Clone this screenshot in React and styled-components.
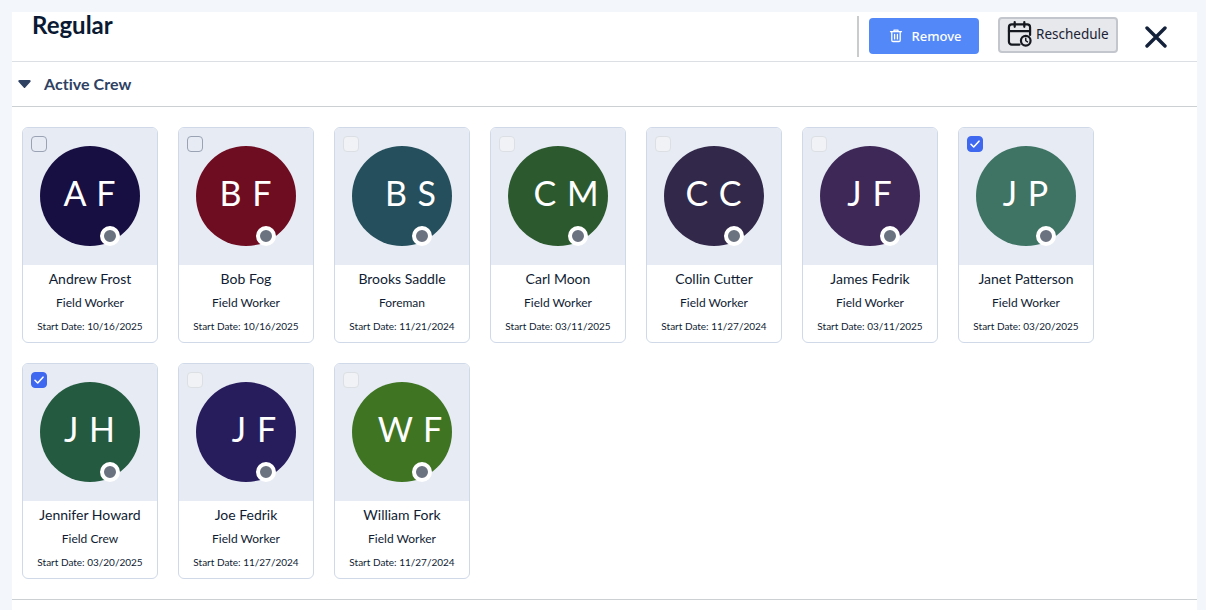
import React from 'react'
import styled, { createGlobalStyle } from 'styled-components'

const GlobalStyle = createGlobalStyle`
  html, body {
    margin: 0;
    padding: 0;
    background: #f3f6fa;
    font-family: "Lato", "Liberation Sans", sans-serif;
  }
`

const Page = styled.div`
  width: 1206px;
  height: 610px;
  padding: 12px 9px 0 12px;
  box-sizing: border-box;
  overflow: hidden;
`

const Panel = styled.div`
  background: #fff;
  height: 598px;
`

const Header = styled.div`
  height: 50px;
  box-sizing: border-box;
  display: flex;
  justify-content: space-between;
  border-bottom: 1px solid #dcdfe3;
`

const Title = styled.h1`
  margin: -1px 0 0 20px;
  font-size: 24px;
  line-height: 28px;
  font-weight: 700;
  color: #0b1a33;
`

const Actions = styled.div`
  display: flex;
  align-items: flex-start;
  padding-top: 4px;
`

const Divider = styled.div`
  width: 2px;
  height: 41px;
  background: #c9cbcd;
  margin-right: 10px;
`

const RemoveButton = styled.button`
  width: 110px;
  height: 36px;
  margin-top: 2px;
  border: none;
  border-radius: 4px;
  background: #5288f8;
  color: #fff;
  font-family: "Noto Sans", sans-serif;
  font-size: 13px;
  font-weight: 500;
  display: flex;
  align-items: center;
  justify-content: center;
  gap: 9px;
  padding: 0 0 1px 2px;
`

const RescheduleButton = styled.button`
  width: 120px;
  height: 36px;
  margin: 1px 0 0 19px;
  box-sizing: border-box;
  border: 2px solid #c3c6cd;
  border-radius: 4px;
  background: #e7e8ec;
  color: #1b2233;
  font-family: "Noto Sans", sans-serif;
  font-size: 13.5px;
  display: flex;
  align-items: center;
  gap: 4px;
  padding: 0 0 2px 7px;
`

const CloseButton = styled.button`
  width: 28px;
  height: 28px;
  margin: 7px 27px 0 24px;
  padding: 0;
  border: none;
  background: none;
  display: flex;
  align-items: center;
  justify-content: center;
`

const SectionHead = styled.div`
  height: 45px;
  box-sizing: border-box;
  display: flex;
  align-items: center;
  gap: 13px;
  padding: 0 0 2px 6px;
  border-bottom: 1px solid #cdd0d3;
`

const SectionTitle = styled.span`
  font-size: 16px;
  font-weight: 700;
  color: #2e4163;
  letter-spacing: 0.05px;
`

const CardGrid = styled.div`
  display: grid;
  grid-template-columns: repeat(7, 136px);
  grid-auto-rows: 216px;
  gap: 20px;
  padding: 20px 10px;
  height: 493px;
  box-sizing: border-box;
  border-bottom: 1px solid #cdd0d3;
`

const Card = styled.div`
  box-sizing: border-box;
  border: 1px solid #cfd9e8;
  border-radius: 6px;
  overflow: hidden;
  display: flex;
  flex-direction: column;
  background: #fff;
`

const CardTop = styled.div`
  position: relative;
  height: 137px;
  flex: none;
  background: #e7ebf4;
  padding: 18px 0 0 17px;
  box-sizing: border-box;
`

const Checkbox = styled.span`
  position: absolute;
  top: 8px;
  left: 8px;
  width: 16px;
  height: 16px;
  box-sizing: border-box;
  border-radius: 4px;
  border: 1px solid ${p => (p.$checked ? '#3f68f0' : p.$faded ? '#dcdfe4' : '#9aa3b3')};
  background: ${p => (p.$checked ? '#3f68f0' : p.$faded ? '#f1f2f5' : 'transparent')};
  display: flex;
  align-items: center;
  justify-content: center;
`

const Avatar = styled.div`
  position: relative;
  width: 100px;
  height: 100px;
  box-sizing: border-box;
  padding-bottom: 7px;
  border-radius: 50%;
  background: ${p => p.$color};
  color: #fff;
  font-size: 34px;
  letter-spacing: 1px;
  display: flex;
  align-items: center;
  justify-content: center;
`

const Initials = styled.span`
  line-height: 1;
  white-space: pre;
  margin-left: ${p => p.$shift || 0}px;
`

const Status = styled.span`
  position: absolute;
  left: 60px;
  top: 80px;
  width: 20px;
  height: 20px;
  box-sizing: border-box;
  border: 4px solid #fff;
  border-radius: 50%;
  background: #6b7280;
`

const CardBody = styled.div`
  flex: 1;
  display: flex;
  flex-direction: column;
  align-items: center;
  padding-top: 5px;
  color: #0f1c33;
`

const Name = styled.div`
  font-size: 14px;
  line-height: 18px;
`

const Role = styled.div`
  font-size: 12px;
  line-height: 16px;
  margin-top: 7px;
`

const StartDate = styled.div`
  font-size: 10px;
  line-height: 14px;
  margin-top: 8px;
  white-space: nowrap;
`

const crew = [
  { name: 'Andrew Frost', role: 'Field Worker', date: '10/16/2025', initials: 'A F', color: '#170e42' },
  { name: 'Bob Fog', role: 'Field Worker', date: '10/16/2025', initials: 'B F', color: '#6e0c22' },
  { name: 'Brooks Saddle', role: 'Foreman', date: '11/21/2024', initials: 'B S', color: '#254f5c', shift: 18, faded: true },
  { name: 'Carl Moon', role: 'Field Worker', date: '03/11/2025', initials: 'C M', color: '#2c5a2e', shift: 17, faded: true },
  { name: 'Collin Cutter', role: 'Field Worker', date: '11/27/2024', initials: 'C C', color: '#322849', faded: true },
  { name: 'James Fedrik', role: 'Field Worker', date: '03/11/2025', initials: 'J F', color: '#3e2858', faded: true },
  { name: 'Janet Patterson', role: 'Field Worker', date: '03/20/2025', initials: 'J P', color: '#3f7465', checked: true },
  { name: 'Jennifer Howard', role: 'Field Crew', date: '03/20/2025', initials: 'J H', color: '#245a3f', checked: true },
  { name: 'Joe Fedrik', role: 'Field Worker', date: '11/27/2024', initials: 'J F', color: '#271c5c', shift: 17, faded: true },
  { name: 'William Fork', role: 'Field Worker', date: '11/27/2024', initials: 'W F', color: '#3f7423', shift: 17, faded: true },
]

const TrashIcon = () => (
  <svg width="14" height="15" viewBox="0 0 14 14" fill="none" stroke="#fff" strokeWidth="1.3" strokeLinecap="round" strokeLinejoin="round">
    <path d="M1.5 3.2h11" />
    <path d="M5 3V1.6h4V3" />
    <path d="M2.8 3.2v8.6c0 .7.5 1.2 1.2 1.2h6c.7 0 1.2-.5 1.2-1.2V3.2" />
    <path d="M5.6 6v4.4M8.4 6v4.4" />
  </svg>
)

const CalendarIcon = () => (
  <svg width="25" height="28" viewBox="0 0 26 28" fill="none" stroke="#15181f" strokeWidth="2.3" strokeLinecap="round" strokeLinejoin="round">
    <path d="M13 25H5a3 3 0 0 1-3-3V7a3 3 0 0 1 3-3h16a3 3 0 0 1 3 3v8" />
    <path d="M8 1.5v5M18 1.5v5M2 11h22" />
    <circle cx="19.5" cy="21" r="5" />
    <path d="M19.5 18.5V21l1.8 1.2" strokeWidth="1.5" />
  </svg>
)

const CloseIcon = () => (
  <svg width="22" height="22" viewBox="0 0 22 22" fill="none" stroke="#14213a" strokeWidth="3.4" strokeLinecap="round">
    <path d="M2 2l18 18M20 2L2 20" />
  </svg>
)

const Caret = () => (
  <svg width="13" height="10" viewBox="0 0 13 10" style={{ marginTop: 2 }}>
    <path d="M1.5 1h10c1 0 1.500 1 1 1.800L7.300 8.400a1 1 0 0 1-1.600 0L.5 2.800C0 2 .5 1 1.500 1z" fill="#2e4163" />
  </svg>
)

const Check = () => (
  <svg width="12" height="12" viewBox="0 0 12 12" fill="none" stroke="#fff" strokeWidth="1.6" strokeLinecap="round" strokeLinejoin="round">
    <path d="M2 6.300l2.700 2.700L10 3.200" />
  </svg>
)

const CrewCard = ({ person }) => (
  <Card>
    <CardTop>
      <Checkbox $checked={person.checked} $faded={person.faded}>
        {person.checked && <Check />}
      </Checkbox>
      <Avatar $color={person.color}>
        <Initials $shift={person.shift}>{person.initials}</Initials>
        <Status />
      </Avatar>
    </CardTop>
    <CardBody>
      <Name>{person.name}</Name>
      <Role>{person.role}</Role>
      <StartDate>Start Date: {person.date}</StartDate>
    </CardBody>
  </Card>
)

const App = () => (
  <Page>
    <GlobalStyle />
    <Panel>
      <Header>
        <Title>Regular</Title>
        <Actions>
          <Divider />
          <RemoveButton><TrashIcon />Remove</RemoveButton>
          <RescheduleButton><CalendarIcon />Reschedule</RescheduleButton>
          <CloseButton><CloseIcon /></CloseButton>
        </Actions>
      </Header>
      <SectionHead>
        <Caret />
        <SectionTitle>Active Crew</SectionTitle>
      </SectionHead>
      <CardGrid>
        {crew.map(person => <CrewCard key={person.name} person={person} />)}
      </CardGrid>
    </Panel>
  </Page>
)

export default App
